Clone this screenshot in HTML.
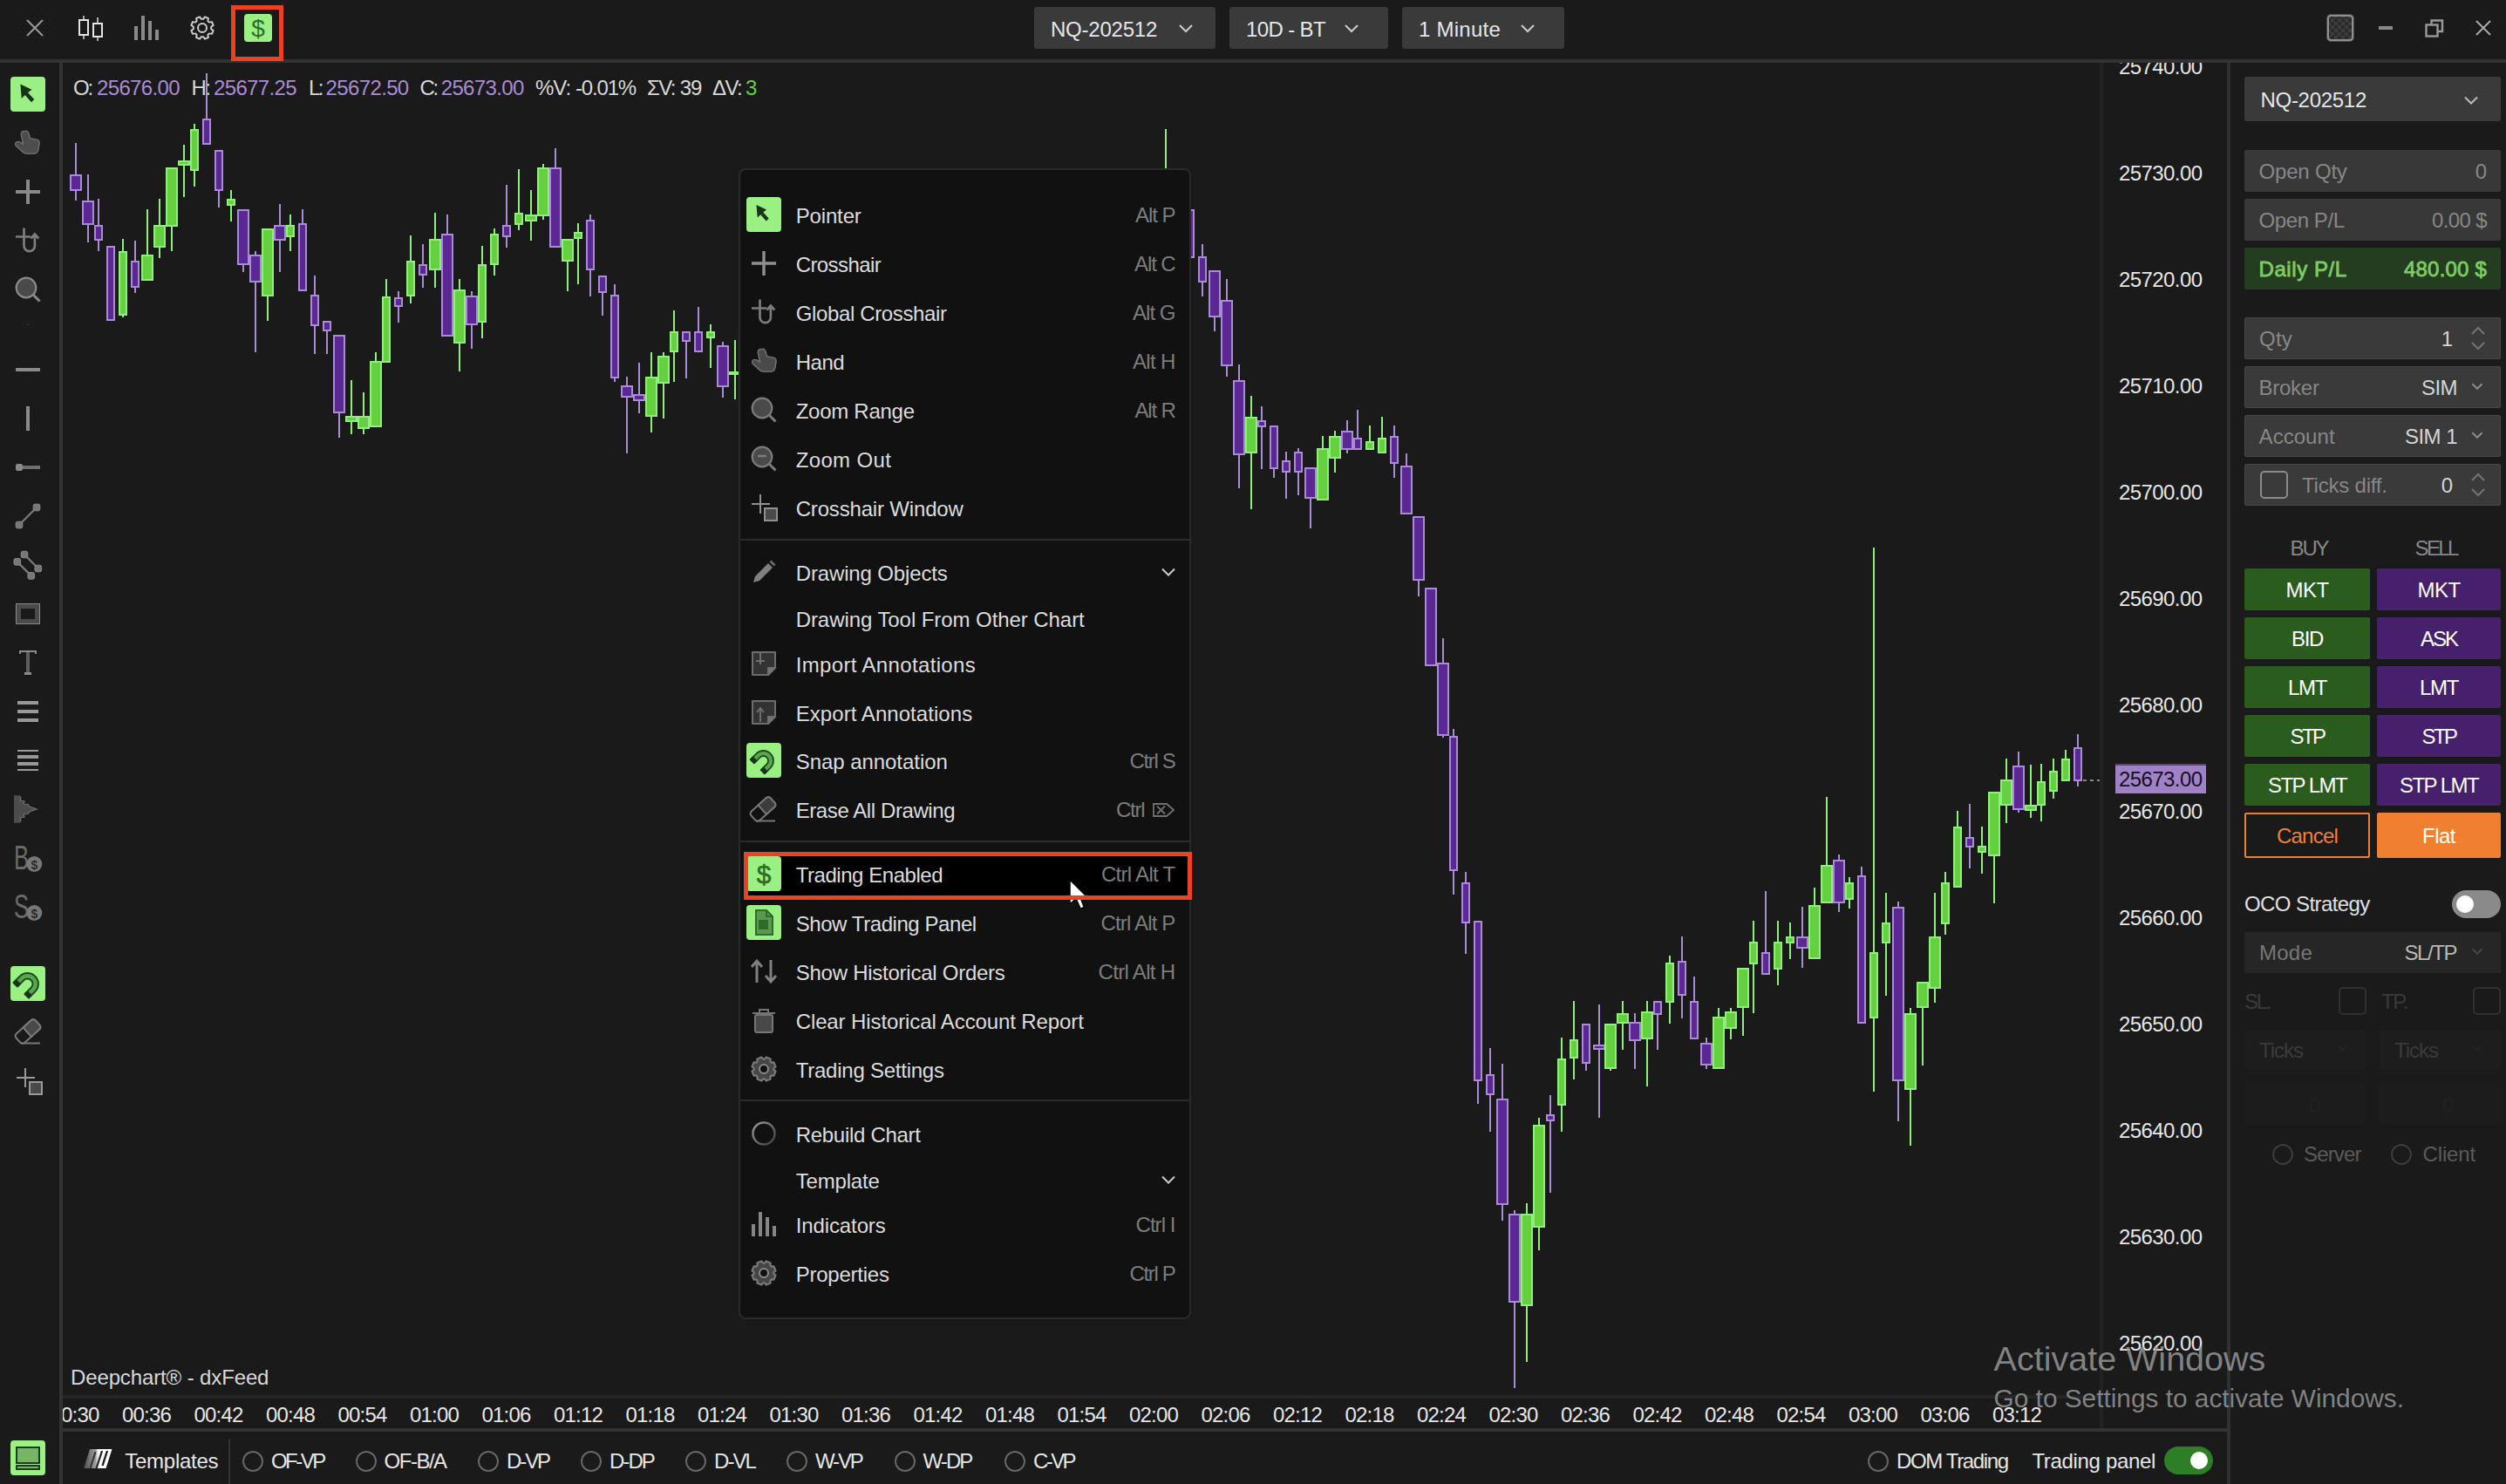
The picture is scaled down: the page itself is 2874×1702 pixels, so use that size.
<!DOCTYPE html>
<html><head><meta charset="utf-8"><title>Deepchart</title><style>html,body{margin:0;padding:0;background:#1a1a1a;}
body{width:2874px;height:1702px;position:relative;overflow:hidden;font-family:"Liberation Sans",sans-serif;}
.b{position:absolute;display:block;}
.t{position:absolute;white-space:nowrap;}
</style></head><body>
<div class="t" style="left:84.0px;top:85.0px;font-size:24px;line-height:32px;color:#d8d8d8;letter-spacing:-2.17px;">O:</div>
<div class="t" style="left:111.0px;top:85.0px;font-size:24px;line-height:32px;color:#a98bd6;letter-spacing:-0.64px;">25676.00</div>
<div class="t" style="left:219.5px;top:85.0px;font-size:24px;line-height:32px;color:#d8d8d8;letter-spacing:-1.50px;">H:</div>
<div class="t" style="left:245.0px;top:85.0px;font-size:24px;line-height:32px;color:#a98bd6;letter-spacing:-0.64px;">25677.25</div>
<div class="t" style="left:354.0px;top:85.0px;font-size:24px;line-height:32px;color:#d8d8d8;letter-spacing:-2.51px;">L:</div>
<div class="t" style="left:373.6px;top:85.0px;font-size:24px;line-height:32px;color:#a98bd6;letter-spacing:-0.64px;">25672.50</div>
<div class="t" style="left:481.6px;top:85.0px;font-size:24px;line-height:32px;color:#d8d8d8;letter-spacing:-2.50px;">C:</div>
<div class="t" style="left:505.7px;top:85.0px;font-size:24px;line-height:32px;color:#a98bd6;letter-spacing:-0.64px;">25673.00</div>
<div class="t" style="left:614.0px;top:85.0px;font-size:24px;line-height:32px;color:#d8d8d8;letter-spacing:-1.04px;">%V:</div>
<div class="t" style="left:660.0px;top:85.0px;font-size:24px;line-height:32px;color:#d8d8d8;letter-spacing:-1.17px;">-0.01%</div>
<div class="t" style="left:742.0px;top:85.0px;font-size:24px;line-height:32px;color:#d8d8d8;letter-spacing:-1.54px;">ΣV:</div>
<div class="t" style="left:779.7px;top:85.0px;font-size:24px;line-height:32px;color:#d8d8d8;letter-spacing:-1.10px;">39</div>
<div class="t" style="left:817.0px;top:85.0px;font-size:24px;line-height:32px;color:#d8d8d8;letter-spacing:-1.61px;">ΔV:</div>
<div class="t" style="left:855.0px;top:85.0px;font-size:24px;line-height:32px;color:#64d040;">3</div>
<svg class="b" style="left:0;top:0" width="2410" height="1600" shape-rendering="crispEdges"><rect x="86" y="164" width="2" height="66" fill="#a98bd6"/><rect x="80" y="200" width="14" height="19" fill="#a98bd6"/><rect x="82" y="202" width="10" height="15" fill="#5b2893"/><rect x="100" y="200" width="2" height="78" fill="#a98bd6"/><rect x="94" y="230" width="14" height="28" fill="#a98bd6"/><rect x="96" y="232" width="10" height="24" fill="#5b2893"/><rect x="112" y="228" width="2" height="60" fill="#a98bd6"/><rect x="108" y="258" width="10" height="18" fill="#a98bd6"/><rect x="110" y="260" width="6" height="14" fill="#5b2893"/><rect x="126" y="282" width="2" height="86" fill="#a98bd6"/><rect x="122" y="282" width="10" height="86" fill="#a98bd6"/><rect x="124" y="284" width="6" height="82" fill="#5b2893"/><rect x="140" y="274" width="2" height="90" fill="#90ee7c"/><rect x="136" y="288" width="10" height="74" fill="#90ee7c"/><rect x="138" y="290" width="6" height="70" fill="#64d040"/><rect x="154" y="276" width="2" height="60" fill="#a98bd6"/><rect x="150" y="299" width="10" height="31" fill="#a98bd6"/><rect x="152" y="301" width="6" height="27" fill="#5b2893"/><rect x="168" y="240" width="2" height="82" fill="#90ee7c"/><rect x="162" y="292" width="14" height="30" fill="#90ee7c"/><rect x="164" y="294" width="10" height="26" fill="#64d040"/><rect x="182" y="228" width="2" height="68" fill="#90ee7c"/><rect x="176" y="258" width="14" height="26" fill="#90ee7c"/><rect x="178" y="260" width="10" height="22" fill="#64d040"/><rect x="196" y="192" width="2" height="96" fill="#90ee7c"/><rect x="190" y="192" width="14" height="68" fill="#90ee7c"/><rect x="192" y="194" width="10" height="64" fill="#64d040"/><rect x="210" y="166" width="2" height="60" fill="#90ee7c"/><rect x="204" y="184" width="14" height="6" fill="#90ee7c"/><rect x="206" y="186" width="10" height="2" fill="#64d040"/><rect x="222" y="142" width="2" height="72" fill="#90ee7c"/><rect x="218" y="148" width="10" height="48" fill="#90ee7c"/><rect x="220" y="150" width="6" height="44" fill="#64d040"/><rect x="236" y="84" width="2" height="82" fill="#a98bd6"/><rect x="232" y="136" width="10" height="30" fill="#a98bd6"/><rect x="234" y="138" width="6" height="26" fill="#5b2893"/><rect x="250" y="172" width="2" height="66" fill="#a98bd6"/><rect x="246" y="172" width="10" height="47" fill="#a98bd6"/><rect x="248" y="174" width="6" height="43" fill="#5b2893"/><rect x="264" y="218" width="2" height="36" fill="#90ee7c"/><rect x="260" y="228" width="10" height="8" fill="#90ee7c"/><rect x="262" y="230" width="6" height="4" fill="#64d040"/><rect x="278" y="240" width="2" height="72" fill="#a98bd6"/><rect x="272" y="240" width="14" height="64" fill="#a98bd6"/><rect x="274" y="242" width="10" height="60" fill="#5b2893"/><rect x="292" y="288" width="2" height="116" fill="#a98bd6"/><rect x="286" y="292" width="14" height="32" fill="#a98bd6"/><rect x="288" y="294" width="10" height="28" fill="#5b2893"/><rect x="306" y="262" width="2" height="106" fill="#90ee7c"/><rect x="300" y="262" width="14" height="78" fill="#90ee7c"/><rect x="302" y="264" width="10" height="74" fill="#64d040"/><rect x="320" y="234" width="2" height="78" fill="#a98bd6"/><rect x="314" y="258" width="14" height="18" fill="#a98bd6"/><rect x="316" y="260" width="10" height="14" fill="#5b2893"/><rect x="332" y="246" width="2" height="42" fill="#90ee7c"/><rect x="328" y="258" width="10" height="14" fill="#90ee7c"/><rect x="330" y="260" width="6" height="10" fill="#64d040"/><rect x="346" y="240" width="2" height="94" fill="#a98bd6"/><rect x="342" y="256" width="10" height="78" fill="#a98bd6"/><rect x="344" y="258" width="6" height="74" fill="#5b2893"/><rect x="360" y="316" width="2" height="90" fill="#a98bd6"/><rect x="356" y="338" width="10" height="36" fill="#a98bd6"/><rect x="358" y="340" width="6" height="32" fill="#5b2893"/><rect x="374" y="368" width="2" height="38" fill="#a98bd6"/><rect x="370" y="368" width="10" height="12" fill="#a98bd6"/><rect x="372" y="370" width="6" height="8" fill="#5b2893"/><rect x="388" y="384" width="2" height="118" fill="#a98bd6"/><rect x="382" y="384" width="14" height="90" fill="#a98bd6"/><rect x="384" y="386" width="10" height="86" fill="#5b2893"/><rect x="402" y="436" width="2" height="62" fill="#90ee7c"/><rect x="396" y="477" width="14" height="7" fill="#90ee7c"/><rect x="398" y="479" width="10" height="3" fill="#64d040"/><rect x="416" y="450" width="2" height="48" fill="#90ee7c"/><rect x="410" y="477" width="14" height="15" fill="#90ee7c"/><rect x="412" y="479" width="10" height="11" fill="#64d040"/><rect x="430" y="404" width="2" height="86" fill="#90ee7c"/><rect x="424" y="414" width="14" height="76" fill="#90ee7c"/><rect x="426" y="416" width="10" height="72" fill="#64d040"/><rect x="442" y="320" width="2" height="96" fill="#90ee7c"/><rect x="438" y="340" width="10" height="76" fill="#90ee7c"/><rect x="440" y="342" width="6" height="72" fill="#64d040"/><rect x="456" y="334" width="2" height="36" fill="#a98bd6"/><rect x="452" y="341" width="10" height="11" fill="#a98bd6"/><rect x="454" y="343" width="6" height="7" fill="#5b2893"/><rect x="470" y="270" width="2" height="78" fill="#90ee7c"/><rect x="466" y="299" width="10" height="41" fill="#90ee7c"/><rect x="468" y="301" width="6" height="37" fill="#64d040"/><rect x="484" y="280" width="2" height="50" fill="#a98bd6"/><rect x="480" y="303" width="10" height="13" fill="#a98bd6"/><rect x="482" y="305" width="6" height="9" fill="#5b2893"/><rect x="498" y="244" width="2" height="86" fill="#90ee7c"/><rect x="492" y="274" width="14" height="36" fill="#90ee7c"/><rect x="494" y="276" width="10" height="32" fill="#64d040"/><rect x="512" y="246" width="2" height="140" fill="#a98bd6"/><rect x="506" y="268" width="14" height="118" fill="#a98bd6"/><rect x="508" y="270" width="10" height="114" fill="#5b2893"/><rect x="526" y="320" width="2" height="106" fill="#90ee7c"/><rect x="520" y="332" width="14" height="62" fill="#90ee7c"/><rect x="522" y="334" width="10" height="58" fill="#64d040"/><rect x="540" y="334" width="2" height="66" fill="#a98bd6"/><rect x="534" y="339" width="14" height="34" fill="#a98bd6"/><rect x="536" y="341" width="10" height="30" fill="#5b2893"/><rect x="552" y="282" width="2" height="106" fill="#90ee7c"/><rect x="548" y="303" width="10" height="67" fill="#90ee7c"/><rect x="550" y="305" width="6" height="63" fill="#64d040"/><rect x="566" y="262" width="2" height="54" fill="#90ee7c"/><rect x="562" y="268" width="10" height="36" fill="#90ee7c"/><rect x="564" y="270" width="6" height="32" fill="#64d040"/><rect x="580" y="212" width="2" height="72" fill="#a98bd6"/><rect x="576" y="258" width="10" height="14" fill="#a98bd6"/><rect x="578" y="260" width="6" height="10" fill="#5b2893"/><rect x="594" y="194" width="2" height="70" fill="#90ee7c"/><rect x="590" y="244" width="10" height="14" fill="#90ee7c"/><rect x="592" y="246" width="6" height="10" fill="#64d040"/><rect x="608" y="218" width="2" height="58" fill="#90ee7c"/><rect x="602" y="246" width="14" height="8" fill="#90ee7c"/><rect x="604" y="248" width="10" height="4" fill="#64d040"/><rect x="622" y="188" width="2" height="64" fill="#90ee7c"/><rect x="616" y="192" width="14" height="56" fill="#90ee7c"/><rect x="618" y="194" width="10" height="52" fill="#64d040"/><rect x="636" y="170" width="2" height="114" fill="#a98bd6"/><rect x="630" y="192" width="14" height="92" fill="#a98bd6"/><rect x="632" y="194" width="10" height="88" fill="#5b2893"/><rect x="650" y="274" width="2" height="60" fill="#90ee7c"/><rect x="644" y="274" width="14" height="26" fill="#90ee7c"/><rect x="646" y="276" width="10" height="22" fill="#64d040"/><rect x="662" y="256" width="2" height="70" fill="#90ee7c"/><rect x="658" y="266" width="10" height="8" fill="#90ee7c"/><rect x="660" y="268" width="6" height="4" fill="#64d040"/><rect x="676" y="246" width="2" height="94" fill="#a98bd6"/><rect x="672" y="252" width="10" height="58" fill="#a98bd6"/><rect x="674" y="254" width="6" height="54" fill="#5b2893"/><rect x="690" y="316" width="2" height="46" fill="#a98bd6"/><rect x="686" y="316" width="10" height="20" fill="#a98bd6"/><rect x="688" y="318" width="6" height="16" fill="#5b2893"/><rect x="704" y="326" width="2" height="112" fill="#a98bd6"/><rect x="700" y="338" width="10" height="96" fill="#a98bd6"/><rect x="702" y="340" width="6" height="92" fill="#5b2893"/><rect x="718" y="432" width="2" height="88" fill="#a98bd6"/><rect x="712" y="442" width="14" height="14" fill="#a98bd6"/><rect x="714" y="444" width="10" height="10" fill="#5b2893"/><rect x="732" y="416" width="2" height="58" fill="#a98bd6"/><rect x="726" y="452" width="14" height="8" fill="#a98bd6"/><rect x="728" y="454" width="10" height="4" fill="#5b2893"/><rect x="746" y="404" width="2" height="92" fill="#90ee7c"/><rect x="740" y="432" width="14" height="46" fill="#90ee7c"/><rect x="742" y="434" width="10" height="42" fill="#64d040"/><rect x="760" y="404" width="2" height="76" fill="#90ee7c"/><rect x="754" y="408" width="14" height="32" fill="#90ee7c"/><rect x="756" y="410" width="10" height="28" fill="#64d040"/><rect x="772" y="356" width="2" height="82" fill="#90ee7c"/><rect x="768" y="380" width="10" height="24" fill="#90ee7c"/><rect x="770" y="382" width="6" height="20" fill="#64d040"/><rect x="786" y="380" width="2" height="54" fill="#a98bd6"/><rect x="782" y="380" width="10" height="12" fill="#a98bd6"/><rect x="784" y="382" width="6" height="8" fill="#5b2893"/><rect x="800" y="352" width="2" height="52" fill="#a98bd6"/><rect x="796" y="380" width="10" height="24" fill="#a98bd6"/><rect x="798" y="382" width="6" height="20" fill="#5b2893"/><rect x="814" y="372" width="2" height="50" fill="#90ee7c"/><rect x="810" y="380" width="10" height="8" fill="#90ee7c"/><rect x="812" y="382" width="6" height="4" fill="#64d040"/><rect x="828" y="392" width="2" height="64" fill="#a98bd6"/><rect x="822" y="396" width="14" height="48" fill="#a98bd6"/><rect x="824" y="398" width="10" height="44" fill="#5b2893"/><rect x="842" y="390" width="2" height="68" fill="#90ee7c"/><rect x="836" y="426" width="14" height="4" fill="#90ee7c"/><rect x="1336" y="148" width="2" height="182" fill="#90ee7c"/><rect x="1332" y="300" width="10" height="20" fill="#90ee7c"/><rect x="1334" y="302" width="6" height="16" fill="#64d040"/><rect x="1364" y="240" width="2" height="56" fill="#a98bd6"/><rect x="1360" y="240" width="10" height="56" fill="#a98bd6"/><rect x="1362" y="242" width="6" height="52" fill="#5b2893"/><rect x="1378" y="280" width="2" height="60" fill="#a98bd6"/><rect x="1374" y="294" width="10" height="30" fill="#a98bd6"/><rect x="1376" y="296" width="6" height="26" fill="#5b2893"/><rect x="1392" y="310" width="2" height="70" fill="#a98bd6"/><rect x="1386" y="310" width="14" height="54" fill="#a98bd6"/><rect x="1388" y="312" width="10" height="50" fill="#5b2893"/><rect x="1406" y="320" width="2" height="112" fill="#a98bd6"/><rect x="1400" y="344" width="14" height="76" fill="#a98bd6"/><rect x="1402" y="346" width="10" height="72" fill="#5b2893"/><rect x="1420" y="418" width="2" height="142" fill="#a98bd6"/><rect x="1414" y="436" width="14" height="86" fill="#a98bd6"/><rect x="1416" y="438" width="10" height="82" fill="#5b2893"/><rect x="1434" y="454" width="2" height="130" fill="#90ee7c"/><rect x="1428" y="478" width="14" height="42" fill="#90ee7c"/><rect x="1430" y="480" width="10" height="38" fill="#64d040"/><rect x="1446" y="466" width="2" height="72" fill="#a98bd6"/><rect x="1442" y="482" width="10" height="8" fill="#a98bd6"/><rect x="1444" y="484" width="6" height="4" fill="#5b2893"/><rect x="1460" y="488" width="2" height="60" fill="#a98bd6"/><rect x="1456" y="488" width="10" height="50" fill="#a98bd6"/><rect x="1458" y="490" width="6" height="46" fill="#5b2893"/><rect x="1474" y="518" width="2" height="54" fill="#a98bd6"/><rect x="1470" y="528" width="10" height="14" fill="#a98bd6"/><rect x="1472" y="530" width="6" height="10" fill="#5b2893"/><rect x="1488" y="514" width="2" height="54" fill="#a98bd6"/><rect x="1484" y="518" width="10" height="24" fill="#a98bd6"/><rect x="1486" y="520" width="6" height="20" fill="#5b2893"/><rect x="1502" y="536" width="2" height="70" fill="#a98bd6"/><rect x="1496" y="536" width="14" height="36" fill="#a98bd6"/><rect x="1498" y="538" width="10" height="32" fill="#5b2893"/><rect x="1516" y="500" width="2" height="74" fill="#90ee7c"/><rect x="1510" y="514" width="14" height="60" fill="#90ee7c"/><rect x="1512" y="516" width="10" height="56" fill="#64d040"/><rect x="1530" y="494" width="2" height="48" fill="#90ee7c"/><rect x="1524" y="500" width="14" height="26" fill="#90ee7c"/><rect x="1526" y="502" width="10" height="22" fill="#64d040"/><rect x="1544" y="482" width="2" height="38" fill="#a98bd6"/><rect x="1538" y="494" width="14" height="22" fill="#a98bd6"/><rect x="1540" y="496" width="10" height="18" fill="#5b2893"/><rect x="1556" y="470" width="2" height="46" fill="#a98bd6"/><rect x="1552" y="502" width="10" height="14" fill="#a98bd6"/><rect x="1554" y="504" width="6" height="10" fill="#5b2893"/><rect x="1570" y="488" width="2" height="28" fill="#90ee7c"/><rect x="1566" y="506" width="10" height="10" fill="#90ee7c"/><rect x="1568" y="508" width="6" height="6" fill="#64d040"/><rect x="1584" y="478" width="2" height="42" fill="#90ee7c"/><rect x="1580" y="502" width="10" height="18" fill="#90ee7c"/><rect x="1582" y="504" width="6" height="14" fill="#64d040"/><rect x="1598" y="488" width="2" height="60" fill="#a98bd6"/><rect x="1594" y="500" width="10" height="32" fill="#a98bd6"/><rect x="1596" y="502" width="6" height="28" fill="#5b2893"/><rect x="1612" y="520" width="2" height="70" fill="#a98bd6"/><rect x="1606" y="534" width="14" height="56" fill="#a98bd6"/><rect x="1608" y="536" width="10" height="52" fill="#5b2893"/><rect x="1626" y="592" width="2" height="92" fill="#a98bd6"/><rect x="1620" y="592" width="14" height="74" fill="#a98bd6"/><rect x="1622" y="594" width="10" height="70" fill="#5b2893"/><rect x="1640" y="674" width="2" height="90" fill="#a98bd6"/><rect x="1634" y="674" width="14" height="90" fill="#a98bd6"/><rect x="1636" y="676" width="10" height="86" fill="#5b2893"/><rect x="1654" y="732" width="2" height="114" fill="#a98bd6"/><rect x="1648" y="760" width="14" height="84" fill="#a98bd6"/><rect x="1650" y="762" width="10" height="80" fill="#5b2893"/><rect x="1666" y="836" width="2" height="190" fill="#a98bd6"/><rect x="1662" y="844" width="10" height="155" fill="#a98bd6"/><rect x="1664" y="846" width="6" height="151" fill="#5b2893"/><rect x="1680" y="1000" width="2" height="94" fill="#a98bd6"/><rect x="1676" y="1012" width="10" height="47" fill="#a98bd6"/><rect x="1678" y="1014" width="6" height="43" fill="#5b2893"/><rect x="1694" y="1056" width="2" height="210" fill="#a98bd6"/><rect x="1690" y="1056" width="10" height="184" fill="#a98bd6"/><rect x="1692" y="1058" width="6" height="180" fill="#5b2893"/><rect x="1708" y="1202" width="2" height="96" fill="#a98bd6"/><rect x="1704" y="1232" width="10" height="24" fill="#a98bd6"/><rect x="1706" y="1234" width="6" height="20" fill="#5b2893"/><rect x="1722" y="1220" width="2" height="180" fill="#a98bd6"/><rect x="1716" y="1260" width="14" height="122" fill="#a98bd6"/><rect x="1718" y="1262" width="10" height="118" fill="#5b2893"/><rect x="1736" y="1388" width="2" height="204" fill="#a98bd6"/><rect x="1730" y="1392" width="14" height="102" fill="#a98bd6"/><rect x="1732" y="1394" width="10" height="98" fill="#5b2893"/><rect x="1750" y="1380" width="2" height="182" fill="#90ee7c"/><rect x="1744" y="1392" width="14" height="106" fill="#90ee7c"/><rect x="1746" y="1394" width="10" height="102" fill="#64d040"/><rect x="1764" y="1282" width="2" height="152" fill="#90ee7c"/><rect x="1758" y="1290" width="14" height="118" fill="#90ee7c"/><rect x="1760" y="1292" width="10" height="114" fill="#64d040"/><rect x="1777" y="1256" width="2" height="112" fill="#a98bd6"/><rect x="1773" y="1278" width="10" height="8" fill="#a98bd6"/><rect x="1775" y="1280" width="6" height="4" fill="#5b2893"/><rect x="1790" y="1190" width="2" height="108" fill="#90ee7c"/><rect x="1786" y="1214" width="10" height="54" fill="#90ee7c"/><rect x="1788" y="1216" width="6" height="50" fill="#64d040"/><rect x="1804" y="1148" width="2" height="90" fill="#90ee7c"/><rect x="1800" y="1192" width="10" height="22" fill="#90ee7c"/><rect x="1802" y="1194" width="6" height="18" fill="#64d040"/><rect x="1818" y="1174" width="2" height="54" fill="#a98bd6"/><rect x="1814" y="1174" width="10" height="46" fill="#a98bd6"/><rect x="1816" y="1176" width="6" height="42" fill="#5b2893"/><rect x="1833" y="1152" width="2" height="130" fill="#a98bd6"/><rect x="1827" y="1198" width="14" height="6" fill="#a98bd6"/><rect x="1829" y="1200" width="10" height="2" fill="#5b2893"/><rect x="1846" y="1174" width="2" height="54" fill="#90ee7c"/><rect x="1840" y="1174" width="14" height="52" fill="#90ee7c"/><rect x="1842" y="1176" width="10" height="48" fill="#64d040"/><rect x="1860" y="1148" width="2" height="56" fill="#90ee7c"/><rect x="1854" y="1162" width="14" height="12" fill="#90ee7c"/><rect x="1856" y="1164" width="10" height="8" fill="#64d040"/><rect x="1874" y="1162" width="2" height="64" fill="#a98bd6"/><rect x="1868" y="1172" width="14" height="22" fill="#a98bd6"/><rect x="1870" y="1174" width="10" height="18" fill="#5b2893"/><rect x="1888" y="1148" width="2" height="98" fill="#90ee7c"/><rect x="1882" y="1160" width="14" height="32" fill="#90ee7c"/><rect x="1884" y="1162" width="10" height="28" fill="#64d040"/><rect x="1900" y="1148" width="2" height="56" fill="#a98bd6"/><rect x="1896" y="1148" width="10" height="16" fill="#a98bd6"/><rect x="1898" y="1150" width="6" height="12" fill="#5b2893"/><rect x="1914" y="1096" width="2" height="78" fill="#90ee7c"/><rect x="1910" y="1104" width="10" height="46" fill="#90ee7c"/><rect x="1912" y="1106" width="6" height="42" fill="#64d040"/><rect x="1928" y="1074" width="2" height="94" fill="#a98bd6"/><rect x="1924" y="1102" width="10" height="40" fill="#a98bd6"/><rect x="1926" y="1104" width="6" height="36" fill="#5b2893"/><rect x="1942" y="1120" width="2" height="72" fill="#a98bd6"/><rect x="1938" y="1148" width="10" height="44" fill="#a98bd6"/><rect x="1940" y="1150" width="6" height="40" fill="#5b2893"/><rect x="1956" y="1190" width="2" height="36" fill="#a98bd6"/><rect x="1950" y="1196" width="14" height="26" fill="#a98bd6"/><rect x="1952" y="1198" width="10" height="22" fill="#5b2893"/><rect x="1970" y="1156" width="2" height="70" fill="#90ee7c"/><rect x="1964" y="1166" width="14" height="60" fill="#90ee7c"/><rect x="1966" y="1168" width="10" height="56" fill="#64d040"/><rect x="1984" y="1156" width="2" height="36" fill="#90ee7c"/><rect x="1978" y="1160" width="14" height="20" fill="#90ee7c"/><rect x="1980" y="1162" width="10" height="16" fill="#64d040"/><rect x="1998" y="1110" width="2" height="78" fill="#90ee7c"/><rect x="1992" y="1110" width="14" height="46" fill="#90ee7c"/><rect x="1994" y="1112" width="10" height="42" fill="#64d040"/><rect x="2010" y="1056" width="2" height="106" fill="#90ee7c"/><rect x="2006" y="1080" width="10" height="26" fill="#90ee7c"/><rect x="2008" y="1082" width="6" height="22" fill="#64d040"/><rect x="2024" y="1022" width="2" height="96" fill="#a98bd6"/><rect x="2020" y="1092" width="10" height="26" fill="#a98bd6"/><rect x="2022" y="1094" width="6" height="22" fill="#5b2893"/><rect x="2038" y="1056" width="2" height="74" fill="#90ee7c"/><rect x="2034" y="1080" width="10" height="32" fill="#90ee7c"/><rect x="2036" y="1082" width="6" height="28" fill="#64d040"/><rect x="2052" y="1058" width="2" height="42" fill="#90ee7c"/><rect x="2048" y="1074" width="10" height="8" fill="#90ee7c"/><rect x="2050" y="1076" width="6" height="4" fill="#64d040"/><rect x="2066" y="1040" width="2" height="70" fill="#a98bd6"/><rect x="2060" y="1074" width="14" height="14" fill="#a98bd6"/><rect x="2062" y="1076" width="10" height="10" fill="#5b2893"/><rect x="2080" y="1018" width="2" height="82" fill="#90ee7c"/><rect x="2074" y="1038" width="14" height="62" fill="#90ee7c"/><rect x="2076" y="1040" width="10" height="58" fill="#64d040"/><rect x="2094" y="914" width="2" height="122" fill="#90ee7c"/><rect x="2088" y="992" width="14" height="44" fill="#90ee7c"/><rect x="2090" y="994" width="10" height="40" fill="#64d040"/><rect x="2108" y="980" width="2" height="66" fill="#a98bd6"/><rect x="2102" y="986" width="14" height="50" fill="#a98bd6"/><rect x="2104" y="988" width="10" height="46" fill="#5b2893"/><rect x="2120" y="1006" width="2" height="36" fill="#90ee7c"/><rect x="2116" y="1012" width="10" height="20" fill="#90ee7c"/><rect x="2118" y="1014" width="6" height="16" fill="#64d040"/><rect x="2134" y="994" width="2" height="180" fill="#a98bd6"/><rect x="2130" y="1004" width="10" height="170" fill="#a98bd6"/><rect x="2132" y="1006" width="6" height="166" fill="#5b2893"/><rect x="2148" y="628" width="2" height="624" fill="#90ee7c"/><rect x="2144" y="1092" width="10" height="76" fill="#90ee7c"/><rect x="2146" y="1094" width="6" height="72" fill="#64d040"/><rect x="2162" y="1024" width="2" height="118" fill="#90ee7c"/><rect x="2158" y="1058" width="10" height="24" fill="#90ee7c"/><rect x="2160" y="1060" width="6" height="20" fill="#64d040"/><rect x="2176" y="1034" width="2" height="252" fill="#a98bd6"/><rect x="2170" y="1040" width="14" height="200" fill="#a98bd6"/><rect x="2172" y="1042" width="10" height="196" fill="#5b2893"/><rect x="2190" y="1156" width="2" height="158" fill="#90ee7c"/><rect x="2184" y="1162" width="14" height="88" fill="#90ee7c"/><rect x="2186" y="1164" width="10" height="84" fill="#64d040"/><rect x="2204" y="1126" width="2" height="96" fill="#90ee7c"/><rect x="2198" y="1126" width="14" height="30" fill="#90ee7c"/><rect x="2200" y="1128" width="10" height="26" fill="#64d040"/><rect x="2218" y="1024" width="2" height="126" fill="#90ee7c"/><rect x="2212" y="1074" width="14" height="60" fill="#90ee7c"/><rect x="2214" y="1076" width="10" height="56" fill="#64d040"/><rect x="2230" y="1000" width="2" height="72" fill="#90ee7c"/><rect x="2226" y="1012" width="10" height="48" fill="#90ee7c"/><rect x="2228" y="1014" width="6" height="44" fill="#64d040"/><rect x="2244" y="930" width="2" height="88" fill="#90ee7c"/><rect x="2240" y="948" width="10" height="70" fill="#90ee7c"/><rect x="2242" y="950" width="6" height="66" fill="#64d040"/><rect x="2258" y="922" width="2" height="74" fill="#a98bd6"/><rect x="2254" y="960" width="10" height="12" fill="#a98bd6"/><rect x="2256" y="962" width="6" height="8" fill="#5b2893"/><rect x="2272" y="948" width="2" height="54" fill="#90ee7c"/><rect x="2268" y="970" width="10" height="8" fill="#90ee7c"/><rect x="2270" y="972" width="6" height="4" fill="#64d040"/><rect x="2286" y="908" width="2" height="128" fill="#90ee7c"/><rect x="2280" y="908" width="14" height="74" fill="#90ee7c"/><rect x="2282" y="910" width="10" height="70" fill="#64d040"/><rect x="2300" y="870" width="2" height="74" fill="#90ee7c"/><rect x="2294" y="894" width="14" height="30" fill="#90ee7c"/><rect x="2296" y="896" width="10" height="26" fill="#64d040"/><rect x="2314" y="862" width="2" height="70" fill="#a98bd6"/><rect x="2308" y="878" width="14" height="51" fill="#a98bd6"/><rect x="2310" y="880" width="10" height="47" fill="#5b2893"/><rect x="2328" y="877" width="2" height="61" fill="#90ee7c"/><rect x="2322" y="923" width="14" height="7" fill="#90ee7c"/><rect x="2324" y="925" width="10" height="3" fill="#64d040"/><rect x="2340" y="876" width="2" height="66" fill="#90ee7c"/><rect x="2336" y="896" width="10" height="28" fill="#90ee7c"/><rect x="2338" y="898" width="6" height="24" fill="#64d040"/><rect x="2354" y="870" width="2" height="46" fill="#90ee7c"/><rect x="2350" y="884" width="10" height="24" fill="#90ee7c"/><rect x="2352" y="886" width="6" height="20" fill="#64d040"/><rect x="2368" y="860" width="2" height="36" fill="#90ee7c"/><rect x="2364" y="870" width="10" height="26" fill="#90ee7c"/><rect x="2366" y="872" width="6" height="22" fill="#64d040"/><rect x="2382" y="842" width="2" height="60" fill="#a98bd6"/><rect x="2378" y="857" width="10" height="39" fill="#a98bd6"/><rect x="2380" y="859" width="6" height="35" fill="#5b2893"/><rect x="2389" y="894" width="4" height="2" fill="#888"/><rect x="2397" y="894" width="4" height="2" fill="#888"/><rect x="2405" y="894" width="4" height="2" fill="#888"/></svg>
<div class="b" style="left:0px;top:68px;width:2874px;height:4px;background:#333333;"></div>
<div class="b" style="left:68px;top:72px;width:4px;height:1630px;background:#333333;"></div>
<div class="b" style="left:2554px;top:72px;width:4px;height:1630px;background:#313131;"></div>
<div class="b" style="left:68px;top:1638px;width:2488px;height:4px;background:#333333;"></div>
<div class="b" style="left:72px;top:1600px;width:2338px;height:4px;background:#252525;"></div>
<div class="b" style="left:2408px;top:72px;width:4px;height:1566px;background:#222222;"></div>
<svg class="b" style="left:28px;top:20px;" width="24" height="24" viewBox="0 0 24 24"><path d="M3 3 L21 21 M21 3 L3 21" stroke="#999" stroke-width="2" fill="none"/></svg>
<svg class="b" style="left:86px;top:16px;" width="36" height="32" viewBox="0 0 36 32"><g fill="none" stroke="#e4e4e4" stroke-width="2"><rect x="5" y="7" width="10" height="17"/><rect x="21" y="11" width="10" height="15"/></g><g fill="#aaa"><rect x="9" y="2" width="2" height="4"/><rect x="9" y="25" width="2" height="4"/><rect x="25" y="4" width="2" height="6"/><rect x="25" y="27" width="2" height="4"/></g></svg>
<svg class="b" style="left:150px;top:16px;" width="36" height="32" viewBox="0 0 36 32"><g fill="#8a8a8a"><rect x="4" y="14" width="4" height="16"/><rect x="12" y="2" width="4" height="28"/><rect x="20" y="8" width="4" height="22"/><rect x="28" y="18" width="4" height="12"/></g></svg>
<svg class="b" style="left:216px;top:16px;" width="32" height="32" viewBox="0 0 32 32"><g fill="none" stroke="#ccc" stroke-width="2" stroke-linejoin="round"><path d="M17.12 5.86 L18.94 3.34 L22.88 4.97 L22.38 8.04 L23.96 9.62 L27.03 9.12 L28.66 13.06 L26.14 14.88 L26.14 17.12 L28.66 18.94 L27.03 22.88 L23.96 22.38 L22.38 23.96 L22.88 27.03 L18.94 28.66 L17.12 26.14 L14.88 26.14 L13.06 28.66 L9.12 27.03 L9.62 23.96 L8.04 22.38 L4.97 22.88 L3.34 18.94 L5.86 17.12 L5.86 14.88 L3.34 13.06 L4.97 9.12 L8.04 9.62 L9.62 8.04 L9.12 4.97 L13.06 3.34 L14.88 5.86 Z"/><circle cx="16" cy="16" r="5"/></g></svg>
<div class="b" style="left:280px;top:16px;width:32px;height:32px;background:#9bf083;border-radius:4px;"></div>
<div class="t" style="left:288.2px;top:16.5px;font-size:28px;line-height:32px;color:#2f6b2a;">$</div>
<div class="b" style="left:265px;top:6px;width:60px;height:64px;border:5px solid #ee4023;box-sizing:border-box;"></div>
<div class="b" style="left:1186px;top:8px;width:208px;height:48px;background:#3a3a3a;border-radius:3px;"></div>
<div class="t" style="left:1205.0px;top:17.5px;font-size:24px;line-height:32px;color:#e6e6e6;letter-spacing:-0.23px;">NQ-202512</div>
<svg class="b" style="left:1350px;top:25px;" width="20" height="16" viewBox="0 0 20 16"><path d="M3 4 L10 11 L17 4" stroke="#ccc" stroke-width="2" fill="none"/></svg>
<div class="b" style="left:1410px;top:8px;width:182px;height:48px;background:#3a3a3a;border-radius:3px;"></div>
<div class="t" style="left:1429.0px;top:17.5px;font-size:24px;line-height:32px;color:#e6e6e6;letter-spacing:-0.63px;">10D - BT</div>
<svg class="b" style="left:1540px;top:25px;" width="20" height="16" viewBox="0 0 20 16"><path d="M3 4 L10 11 L17 4" stroke="#ccc" stroke-width="2" fill="none"/></svg>
<div class="b" style="left:1608px;top:8px;width:186px;height:48px;background:#3a3a3a;border-radius:3px;"></div>
<div class="t" style="left:1627.0px;top:17.5px;font-size:24px;line-height:32px;color:#e6e6e6;letter-spacing:0.24px;">1 Minute</div>
<svg class="b" style="left:1742px;top:25px;" width="20" height="16" viewBox="0 0 20 16"><path d="M3 4 L10 11 L17 4" stroke="#ccc" stroke-width="2" fill="none"/></svg>
<div class="b" style="left:2668px;top:16px;width:32px;height:32px;border-radius:5px;border:1px solid #484848;box-sizing:border-box;"></div>
<div class="b" style="left:2669px;top:17px;width:30px;height:30px;border-radius:4px;border:2px solid #8f8f8f;box-sizing:border-box;background:repeating-conic-gradient(#2a2a2a 0% 25%, #3c3c3c 0% 50%) 2px 2px/8px 8px;"></div>
<div class="b" style="left:2728px;top:30px;width:16px;height:4px;background:#8a8a8a;"></div>
<svg class="b" style="left:2780px;top:20px;" width="24" height="24" viewBox="0 0 24 24"><g fill="none" stroke="#999" stroke-width="2.4"><rect x="2.5" y="8.5" width="13" height="13"/><path d="M8.5 8 V3.5 H21 V16 H16"/></g></svg>
<svg class="b" style="left:2838px;top:22px;" width="20" height="20" viewBox="0 0 20 20"><path d="M2 2 L18 18 M18 2 L2 18" stroke="#aaa" stroke-width="2" fill="none"/></svg>
<div class="t" style="left:2430.0px;top:1524.5px;font-size:24px;line-height:32px;color:#e6e6e6;letter-spacing:-0.58px;">25620.00</div>
<div class="t" style="left:2430.0px;top:1402.5px;font-size:24px;line-height:32px;color:#e6e6e6;letter-spacing:-0.58px;">25630.00</div>
<div class="t" style="left:2430.0px;top:1280.5px;font-size:24px;line-height:32px;color:#e6e6e6;letter-spacing:-0.58px;">25640.00</div>
<div class="t" style="left:2430.0px;top:1158.5px;font-size:24px;line-height:32px;color:#e6e6e6;letter-spacing:-0.58px;">25650.00</div>
<div class="t" style="left:2430.0px;top:1036.5px;font-size:24px;line-height:32px;color:#e6e6e6;letter-spacing:-0.58px;">25660.00</div>
<div class="t" style="left:2430.0px;top:914.5px;font-size:24px;line-height:32px;color:#e6e6e6;letter-spacing:-0.58px;">25670.00</div>
<div class="t" style="left:2430.0px;top:792.5px;font-size:24px;line-height:32px;color:#e6e6e6;letter-spacing:-0.58px;">25680.00</div>
<div class="t" style="left:2430.0px;top:670.5px;font-size:24px;line-height:32px;color:#e6e6e6;letter-spacing:-0.58px;">25690.00</div>
<div class="t" style="left:2430.0px;top:548.5px;font-size:24px;line-height:32px;color:#e6e6e6;letter-spacing:-0.58px;">25700.00</div>
<div class="t" style="left:2430.0px;top:426.5px;font-size:24px;line-height:32px;color:#e6e6e6;letter-spacing:-0.58px;">25710.00</div>
<div class="t" style="left:2430.0px;top:304.5px;font-size:24px;line-height:32px;color:#e6e6e6;letter-spacing:-0.58px;">25720.00</div>
<div class="t" style="left:2430.0px;top:182.5px;font-size:24px;line-height:32px;color:#e6e6e6;letter-spacing:-0.58px;">25730.00</div>
<div class="b" style="left:2420px;top:72px;width:120px;height:30px;overflow:hidden">
<div class="t" style="left:10.0px;top:-11.5px;font-size:24px;line-height:32px;color:#e6e6e6;letter-spacing:-0.58px;">25740.00</div>
</div>
<div class="b" style="left:2426px;top:876px;width:104px;height:34px;background:#a081c5;border-top:2px solid #574769;box-sizing:border-box;"></div>
<div class="t" style="left:2430.0px;top:878.0px;font-size:24px;line-height:32px;color:#15101f;letter-spacing:-0.58px;">25673.00</div>
<div class="b" style="left:72px;top:1604px;width:2338px;height:34px;overflow:hidden">
<div class="t" style="left:-14.5px;top:3.0px;font-size:24px;line-height:32px;color:#e6e6e6;letter-spacing:-0.81px;">00:30</div>
<div class="t" style="left:68.0px;top:3.0px;font-size:24px;line-height:32px;color:#e6e6e6;letter-spacing:-0.81px;">00:36</div>
<div class="t" style="left:150.5px;top:3.0px;font-size:24px;line-height:32px;color:#e6e6e6;letter-spacing:-0.81px;">00:42</div>
<div class="t" style="left:233.0px;top:3.0px;font-size:24px;line-height:32px;color:#e6e6e6;letter-spacing:-0.81px;">00:48</div>
<div class="t" style="left:315.5px;top:3.0px;font-size:24px;line-height:32px;color:#e6e6e6;letter-spacing:-0.81px;">00:54</div>
<div class="t" style="left:398.0px;top:3.0px;font-size:24px;line-height:32px;color:#e6e6e6;letter-spacing:-0.81px;">01:00</div>
<div class="t" style="left:480.5px;top:3.0px;font-size:24px;line-height:32px;color:#e6e6e6;letter-spacing:-0.81px;">01:06</div>
<div class="t" style="left:563.0px;top:3.0px;font-size:24px;line-height:32px;color:#e6e6e6;letter-spacing:-0.81px;">01:12</div>
<div class="t" style="left:645.5px;top:3.0px;font-size:24px;line-height:32px;color:#e6e6e6;letter-spacing:-0.81px;">01:18</div>
<div class="t" style="left:728.0px;top:3.0px;font-size:24px;line-height:32px;color:#e6e6e6;letter-spacing:-0.81px;">01:24</div>
<div class="t" style="left:810.5px;top:3.0px;font-size:24px;line-height:32px;color:#e6e6e6;letter-spacing:-0.81px;">01:30</div>
<div class="t" style="left:893.0px;top:3.0px;font-size:24px;line-height:32px;color:#e6e6e6;letter-spacing:-0.81px;">01:36</div>
<div class="t" style="left:975.5px;top:3.0px;font-size:24px;line-height:32px;color:#e6e6e6;letter-spacing:-0.81px;">01:42</div>
<div class="t" style="left:1058.0px;top:3.0px;font-size:24px;line-height:32px;color:#e6e6e6;letter-spacing:-0.81px;">01:48</div>
<div class="t" style="left:1140.5px;top:3.0px;font-size:24px;line-height:32px;color:#e6e6e6;letter-spacing:-0.81px;">01:54</div>
<div class="t" style="left:1223.0px;top:3.0px;font-size:24px;line-height:32px;color:#e6e6e6;letter-spacing:-0.81px;">02:00</div>
<div class="t" style="left:1305.5px;top:3.0px;font-size:24px;line-height:32px;color:#e6e6e6;letter-spacing:-0.81px;">02:06</div>
<div class="t" style="left:1388.0px;top:3.0px;font-size:24px;line-height:32px;color:#e6e6e6;letter-spacing:-0.81px;">02:12</div>
<div class="t" style="left:1470.5px;top:3.0px;font-size:24px;line-height:32px;color:#e6e6e6;letter-spacing:-0.81px;">02:18</div>
<div class="t" style="left:1553.0px;top:3.0px;font-size:24px;line-height:32px;color:#e6e6e6;letter-spacing:-0.81px;">02:24</div>
<div class="t" style="left:1635.5px;top:3.0px;font-size:24px;line-height:32px;color:#e6e6e6;letter-spacing:-0.81px;">02:30</div>
<div class="t" style="left:1718.0px;top:3.0px;font-size:24px;line-height:32px;color:#e6e6e6;letter-spacing:-0.81px;">02:36</div>
<div class="t" style="left:1800.5px;top:3.0px;font-size:24px;line-height:32px;color:#e6e6e6;letter-spacing:-0.81px;">02:42</div>
<div class="t" style="left:1883.0px;top:3.0px;font-size:24px;line-height:32px;color:#e6e6e6;letter-spacing:-0.81px;">02:48</div>
<div class="t" style="left:1965.5px;top:3.0px;font-size:24px;line-height:32px;color:#e6e6e6;letter-spacing:-0.81px;">02:54</div>
<div class="t" style="left:2048.0px;top:3.0px;font-size:24px;line-height:32px;color:#e6e6e6;letter-spacing:-0.81px;">03:00</div>
<div class="t" style="left:2130.5px;top:3.0px;font-size:24px;line-height:32px;color:#e6e6e6;letter-spacing:-0.81px;">03:06</div>
<div class="t" style="left:2213.0px;top:3.0px;font-size:24px;line-height:32px;color:#e6e6e6;letter-spacing:-0.81px;">03:12</div>
</div>
<div class="t" style="left:81.0px;top:1563.5px;font-size:24px;line-height:32px;color:#d8d8d8;letter-spacing:-0.13px;">Deepchart® - dxFeed</div>
<div class="b" style="left:12px;top:1652px;width:40px;height:40px;background:#9bf083;border-radius:4px;"></div>
<svg class="b" style="left:12px;top:1652px;" width="40" height="40" viewBox="0 0 40 40"><g fill="#78b466" stroke="#1c3d1b" stroke-width="2"><rect x="7" y="8" width="26" height="18"/><rect x="7" y="29" width="26" height="4"/></g></svg>
<svg class="b" style="left:96px;top:1661px;" width="34" height="24" viewBox="0 0 34 24"><defs><linearGradient id="tg" x1="0" y1="0" x2="1" y2="0"><stop offset="0" stop-color="#4a4a4a"/><stop offset="0.42" stop-color="#a0a0a0"/><stop offset="0.52" stop-color="#ffffff"/><stop offset="1" stop-color="#ffffff"/></linearGradient></defs><path d="M0 23 L7 1 L32.5 1 L25.5 23 Z" fill="url(#tg)"/><g stroke-width="2.4" fill="none"><path d="M7.5 23 L13.5 4" stroke="#3a3a3a"/><path d="M14.5 23 L21 3" stroke="#2a2a2a"/><path d="M21.5 20 L27 3" stroke="#1e1e1e"/></g></svg>
<div class="t" style="left:143.3px;top:1660.0px;font-size:24px;line-height:32px;color:#e6e6e6;letter-spacing:-0.26px;">Templates</div>
<div class="b" style="left:262px;top:1651px;width:2px;height:51px;background:#333333;"></div>
<div class="b" style="left:278px;top:1664px;width:24px;height:24px;border-radius:12px;border:2px solid #666;box-sizing:border-box;"></div>
<div class="t" style="left:311.0px;top:1660.0px;font-size:24px;line-height:32px;color:#e6e6e6;letter-spacing:-2.55px;">OF-VP</div>
<div class="b" style="left:408px;top:1664px;width:24px;height:24px;border-radius:12px;border:2px solid #666;box-sizing:border-box;"></div>
<div class="t" style="left:440.6px;top:1660.0px;font-size:24px;line-height:32px;color:#e6e6e6;letter-spacing:-1.50px;">OF-B/A</div>
<div class="b" style="left:547.8px;top:1664px;width:24px;height:24px;border-radius:12px;border:2px solid #666;box-sizing:border-box;"></div>
<div class="t" style="left:581.0px;top:1660.0px;font-size:24px;line-height:32px;color:#e6e6e6;letter-spacing:-2.08px;">D-VP</div>
<div class="b" style="left:665.8px;top:1664px;width:24px;height:24px;border-radius:12px;border:2px solid #666;box-sizing:border-box;"></div>
<div class="t" style="left:699.0px;top:1660.0px;font-size:24px;line-height:32px;color:#e6e6e6;letter-spacing:-1.97px;">D-DP</div>
<div class="b" style="left:785.7px;top:1664px;width:24px;height:24px;border-radius:12px;border:2px solid #666;box-sizing:border-box;"></div>
<div class="t" style="left:819.0px;top:1660.0px;font-size:24px;line-height:32px;color:#e6e6e6;letter-spacing:-1.92px;">D-VL</div>
<div class="b" style="left:901.8px;top:1664px;width:24px;height:24px;border-radius:12px;border:2px solid #666;box-sizing:border-box;"></div>
<div class="t" style="left:935.0px;top:1660.0px;font-size:24px;line-height:32px;color:#e6e6e6;letter-spacing:-2.13px;">W-VP</div>
<div class="b" style="left:1026px;top:1664px;width:24px;height:24px;border-radius:12px;border:2px solid #666;box-sizing:border-box;"></div>
<div class="t" style="left:1058.5px;top:1660.0px;font-size:24px;line-height:32px;color:#e6e6e6;letter-spacing:-1.89px;">W-DP</div>
<div class="b" style="left:1151.8px;top:1664px;width:24px;height:24px;border-radius:12px;border:2px solid #666;box-sizing:border-box;"></div>
<div class="t" style="left:1185.0px;top:1660.0px;font-size:24px;line-height:32px;color:#e6e6e6;letter-spacing:-2.58px;">C-VP</div>
<div class="b" style="left:2141.7px;top:1664px;width:24px;height:24px;border-radius:12px;border:2px solid #666;box-sizing:border-box;"></div>
<div class="t" style="left:2175.0px;top:1660.0px;font-size:24px;line-height:32px;color:#e6e6e6;letter-spacing:-1.37px;">DOM Trading</div>
<div class="t" style="left:2330.4px;top:1660.0px;font-size:24px;line-height:32px;color:#e6e6e6;letter-spacing:-0.33px;">Trading panel</div>
<div class="b" style="left:2482px;top:1659px;width:56px;height:32px;background:#2e7d27;border-radius:16px;"></div>
<div class="b" style="left:2512px;top:1665px;width:20px;height:20px;background:#fff;border-radius:10px;"></div>
<div class="b" style="left:12px;top:88px;width:40px;height:40px;background:#9bf083;border-radius:4px;"></div>
<svg class="b" style="left:12px;top:88px;" width="40" height="40" viewBox="0 0 40 40"><g transform="translate(-1.5,-1.5) scale(1.12)"><path d="M11.5 9 l1.2 14.6 l3.6 -3.4 l6.4 7.2 l3 -2.8 l-6.4 -7 l3.8 -3.2 z" fill="#16351a"/></g></svg>
<svg class="b" style="left:16px;top:148px;" width="34" height="34" viewBox="0 0 34 34"><g transform="translate(1,1)"><path d="M11.5 1.5 c1.8 -.8 3.6 .2 4.2 2 l1.8 6.3 l7 1.2 c2.6 .5 3.9 2.5 3.5 5 l-1.2 7.2 c-.5 2.6 -2.2 4 -4.8 4 l-8 0 c-2 0 -3.6 -.7 -5 -2 l-7.4 -6.8 c-1.6 -1.5 -1.2 -3.8 .8 -4.6 c1.6 -.6 3.2 -.2 4.6 .8 l2.6 1.8 l-2.2 -10.6 c-.4 -2 .6 -3.6 2.4 -4.3 z" fill="#4d4d4d" stroke="#6a6a6a" stroke-width="1.6" stroke-linejoin="round"/></g></svg>
<svg class="b" style="left:16px;top:204px;" width="32" height="32" viewBox="0 0 32 32"><path d="M16 2 V30 M2 16 H30" stroke="#8a8a8a" stroke-width="4" fill="none"/></svg>
<svg class="b" style="left:16px;top:260px;" width="32" height="32" viewBox="0 0 32 32"><g fill="none" stroke="#7e7e7e" stroke-width="2.7"><path d="M11.5 1.5 V14 M2 11.5 H19"/><path d="M11.5 14 v8 a6.2 6.2 0 0 0 12.4 0 V9.5 M19.5 13.5 l4.4 -5 l4.4 5"/></g></svg>
<svg class="b" style="left:16px;top:316px;" width="32" height="32" viewBox="0 0 32 32"><circle cx="14" cy="14" r="11.3" fill="#4a4a4a" stroke="#8a8a8a" stroke-width="2.2"/><path d="M22 22 L29.5 29.5" stroke="#8a8a8a" stroke-width="3"/></svg>
<div class="b" style="left:31px;top:371px;width:2px;height:2px;background:#2c2c2c;"></div>
<div class="b" style="left:18px;top:422px;width:28px;height:4px;background:#8a8a8a;"></div>
<div class="b" style="left:30px;top:466px;width:4px;height:28px;background:#8a8a8a;"></div>
<div class="b" style="left:18px;top:534px;width:28px;height:4px;background:#6e6e6e;"></div>
<div class="b" style="left:18px;top:532px;width:8px;height:8px;background:#8a8a8a;border-radius:2px;"></div>
<svg class="b" style="left:0px;top:560px;" width="64" height="120" viewBox="0 0 64 120"><path d="M22 42 L42 22" stroke="#777" stroke-width="2.4"/><rect x="18.2" y="38.2" width="7.6" height="7.6" rx="2" fill="#777" stroke="#8a8a8a" stroke-width="1"/><rect x="38.2" y="18.2" width="7.6" height="7.6" rx="2" fill="#777" stroke="#8a8a8a" stroke-width="1"/><path d="M28 76 L43.8 92 M19.8 84.3 L35.8 100.4" stroke="#777" stroke-width="2.4"/><rect x="24.2" y="72.2" width="7.6" height="7.6" rx="2" fill="#777" stroke="#8a8a8a" stroke-width="1"/><rect x="40.0" y="88.2" width="7.6" height="7.6" rx="2" fill="#777" stroke="#8a8a8a" stroke-width="1"/><rect x="16.0" y="80.5" width="7.6" height="7.6" rx="2" fill="#777" stroke="#8a8a8a" stroke-width="1"/><rect x="31.999999999999996" y="96.60000000000001" width="7.6" height="7.6" rx="2" fill="#777" stroke="#8a8a8a" stroke-width="1"/></svg>
<div class="b" style="left:18px;top:692px;width:28px;height:24px;background:#4a4a4a;border:1.5px solid #8a8a8a;box-sizing:border-box;"></div>
<div class="b" style="left:24px;top:698px;width:16px;height:12px;background:#1a1a1a;"></div>
<div class="b" style="left:22px;top:746px;width:20px;height:2px;background:#8a8a8a;"></div>
<div class="b" style="left:22px;top:746px;width:2px;height:4px;background:#8a8a8a;"></div>
<div class="b" style="left:40px;top:746px;width:2px;height:4px;background:#8a8a8a;"></div>
<div class="b" style="left:30px;top:748px;width:4px;height:24px;background:#5e5e5e;"></div>
<div class="b" style="left:28px;top:771px;width:8px;height:2.5px;background:#8a8a8a;"></div>
<div class="b" style="left:20px;top:804px;width:24px;height:4px;background:#999;"></div>
<div class="b" style="left:20px;top:814px;width:24px;height:4px;background:#999;"></div>
<div class="b" style="left:20px;top:824px;width:24px;height:4px;background:#999;"></div>
<div class="b" style="left:20px;top:860px;width:24px;height:2px;background:#999;"></div>
<div class="b" style="left:20px;top:866px;width:24px;height:4px;background:#999;"></div>
<div class="b" style="left:20px;top:874px;width:24px;height:4px;background:#999;"></div>
<div class="b" style="left:20px;top:882px;width:24px;height:2px;background:#999;"></div>
<svg class="b" style="left:14px;top:910px;" width="36" height="36" viewBox="0 0 36 36"><path d="M2 2 L8 2.5 L10 5 L9 8 L14 9 L13 12 L18 12.5 L20 15 L28 18 L20 21 L18 23.5 L13 24 L14 27 L9 28 L10 31 L8 33.5 L2 34 Z" fill="#4c4c4c"/><path d="M8 2.5 L10 5 L9 8 L14 9 L13 12 L18 12.5 L20 15 L28 18 L20 21 L18 23.5 L13 24 L14 27 L9 28 L10 31 L8 33.5" fill="none" stroke="#707070" stroke-width="1.2"/></svg>
<div class="t" style="left:16.0px;top:962.0px;font-size:39px;line-height:44px;color:#6a6a6a;transform:scaleX(0.66);transform-origin:0 50%;">B</div>
<svg class="b" style="left:30px;top:981px;" width="20" height="20" viewBox="0 0 20 20"><circle cx="9.3" cy="10" r="9" fill="#777"/></svg>
<div class="t" style="left:35.4px;top:982.5px;font-size:14px;line-height:18px;color:#2a2a2a;font-weight:bold;">$</div>
<div class="t" style="left:16.0px;top:1018.0px;font-size:39px;line-height:44px;color:#6a6a6a;transform:scaleX(0.66);transform-origin:0 50%;">S</div>
<svg class="b" style="left:30px;top:1037px;" width="20" height="20" viewBox="0 0 20 20"><circle cx="9.3" cy="10" r="9" fill="#777"/></svg>
<div class="t" style="left:35.4px;top:1038.5px;font-size:14px;line-height:18px;color:#2a2a2a;font-weight:bold;">$</div>
<div class="b" style="left:12px;top:1108px;width:40px;height:40px;background:#9bf083;border-radius:4px;"></div>
<svg class="b" style="left:12px;top:1108px;" width="40" height="40" viewBox="0 0 40 40"><g transform="translate(19.5,20.5) rotate(45) scale(1.08)"><path d="M-11.5 9.5 L-11.5 0 A11.5 11.5 0 0 1 11.5 0 L11.5 9.5 L5.5 9.5 L5.5 0 A5.5 5.5 0 0 0 -5.5 0 L-5.5 9.5 Z" fill="#5aa64e" stroke="#1d4a1c" stroke-width="1.8" stroke-linejoin="round"/><path d="M-11.5 5.5 H-5.5 V9.5 H-11.5 Z M5.5 5.5 H11.5 V9.5 H5.5 Z" fill="#16351a" stroke="#16351a" stroke-width="1.2" stroke-linejoin="round"/></g></svg>
<svg class="b" style="left:16px;top:1168px;" width="34" height="32" viewBox="0 0 34 32"><g transform="rotate(-42 16 15)"><rect x="1" y="8" width="30" height="14" rx="3.5" fill="none" stroke="#7a7a7a" stroke-width="2"/><path d="M15 8 H27.5 a3.5 3.5 0 0 1 3.5 3.5 V18.5 a3.5 3.5 0 0 1 -3.5 3.5 H15 Z" fill="#4a4a4a" stroke="#7a7a7a" stroke-width="2"/></g><path d="M8 28.5 H30" stroke="#7a7a7a" stroke-width="2"/></svg>
<svg class="b" style="left:18.5px;top:1224px;" width="32" height="34" viewBox="0 0 32 34"><path d="M10 1 V23 M0 12 H21" stroke="#999" stroke-width="2" fill="none"/><rect x="15" y="17" width="14" height="14" fill="#4a4a4a" stroke="#999" stroke-width="2"/></svg>
<div class="b" style="left:2574px;top:88px;width:294px;height:51px;background:#3a3a3a;border-radius:2px;"></div>
<div class="t" style="left:2592.5px;top:98.5px;font-size:24px;line-height:32px;color:#e6e6e6;letter-spacing:-0.29px;">NQ-202512</div>
<svg class="b" style="left:2824px;top:106.5px;" width="20" height="16" viewBox="0 0 20 16"><path d="M3.0 4.5 L10 11.5 L17.0 4.5" stroke="#bbb" stroke-width="2" fill="none"/></svg>
<div class="b" style="left:2574px;top:172px;width:294px;height:48px;background:#383838;border-radius:2px;"></div>
<div class="t" style="left:2590.6px;top:180.5px;font-size:24px;line-height:32px;color:#878787;letter-spacing:-0.21px;">Open Qty</div>
<div class="t" style="left:2838.7px;top:180.5px;font-size:24px;line-height:32px;color:#878787;">0</div>
<div class="b" style="left:2574px;top:228px;width:294px;height:48px;background:#383838;border-radius:2px;"></div>
<div class="t" style="left:2590.6px;top:236.5px;font-size:24px;line-height:32px;color:#878787;letter-spacing:-0.43px;">Open P/L</div>
<div class="t" style="left:2789.0px;top:236.5px;font-size:24px;line-height:32px;color:#878787;letter-spacing:-0.62px;">0.00 $</div>
<div class="b" style="left:2574px;top:284px;width:294px;height:48px;background:#243d20;border-radius:2px;"></div>
<div class="t" style="left:2590.6px;top:293.0px;font-size:24px;line-height:32px;color:#7ccc64;letter-spacing:0.55px;-webkit-text-stroke:0.8px #7ccc64;">Daily P/L</div>
<div class="t" style="left:2757.0px;top:293.0px;font-size:24px;line-height:32px;color:#7ccc64;letter-spacing:0.20px;-webkit-text-stroke:0.8px #7ccc64;">480.00 $</div>
<div class="b" style="left:2574px;top:364px;width:294px;height:48px;background:#3a3a3a;border-radius:2px;border:1px solid #484848;box-sizing:border-box;"></div>
<div class="t" style="left:2591.0px;top:372.5px;font-size:24px;line-height:32px;color:#878787;letter-spacing:0.22px;">Qty</div>
<div class="t" style="left:2799.7px;top:372.5px;font-size:24px;line-height:32px;color:#d4d4d4;">1</div>
<svg class="b" style="left:2831.5px;top:370px;" width="20" height="36" viewBox="0 0 20 36"><path d="M3 13 L10 6 L17 13 M3 23 L10 30 L17 23" stroke="#747474" stroke-width="2" fill="none"/></svg>
<div class="b" style="left:2574px;top:420px;width:294px;height:48px;background:#3a3a3a;border-radius:2px;border:1px solid #484848;box-sizing:border-box;"></div>
<div class="t" style="left:2590.6px;top:428.5px;font-size:24px;line-height:32px;color:#878787;letter-spacing:-0.28px;">Broker</div>
<div class="t" style="left:2777.0px;top:428.5px;font-size:24px;line-height:32px;color:#d4d4d4;letter-spacing:-0.56px;">SIM</div>
<svg class="b" style="left:2831px;top:435px;" width="20" height="16" viewBox="0 0 20 16"><path d="M4.3999999999999995 5.199999999999999 L10 10.8 L15.600000000000001 5.199999999999999" stroke="#8c8c8c" stroke-width="2" fill="none"/></svg>
<div class="b" style="left:2574px;top:476px;width:294px;height:48px;background:#3a3a3a;border-radius:2px;border:1px solid #484848;box-sizing:border-box;"></div>
<div class="t" style="left:2590.6px;top:484.5px;font-size:24px;line-height:32px;color:#878787;letter-spacing:0.04px;">Account</div>
<div class="t" style="left:2758.0px;top:484.5px;font-size:24px;line-height:32px;color:#d4d4d4;letter-spacing:-0.54px;">SIM 1</div>
<svg class="b" style="left:2831px;top:491px;" width="20" height="16" viewBox="0 0 20 16"><path d="M4.3999999999999995 5.199999999999999 L10 10.8 L15.600000000000001 5.199999999999999" stroke="#8c8c8c" stroke-width="2" fill="none"/></svg>
<div class="b" style="left:2574px;top:532px;width:294px;height:48px;background:#3a3a3a;border-radius:2px;border:1px solid #484848;box-sizing:border-box;"></div>
<div class="b" style="left:2592px;top:540px;width:32px;height:32px;border-radius:5px;border:2px solid #8a8a8a;box-sizing:border-box;"></div>
<div class="t" style="left:2640.0px;top:540.5px;font-size:24px;line-height:32px;color:#878787;letter-spacing:-0.21px;">Ticks diff.</div>
<div class="t" style="left:2799.7px;top:540.5px;font-size:24px;line-height:32px;color:#d4d4d4;">0</div>
<svg class="b" style="left:2831.5px;top:538px;" width="20" height="36" viewBox="0 0 20 36"><path d="M3 13 L10 6 L17 13 M3 23 L10 30 L17 23" stroke="#747474" stroke-width="2" fill="none"/></svg>
<div class="t" style="left:2626.5px;top:613.0px;font-size:24px;line-height:32px;color:#878787;letter-spacing:-2.12px;">BUY</div>
<div class="t" style="left:2769.6px;top:613.0px;font-size:24px;line-height:32px;color:#878787;letter-spacing:-2.68px;">SELL</div>
<div class="b" style="left:2574px;top:652px;width:144px;height:48px;background:#2a5c1e;border-radius:2px;"></div>
<div class="b" style="left:2726px;top:652px;width:142px;height:48px;background:#46206c;border-radius:2px;"></div>
<div class="t" style="left:2621.5px;top:660.5px;font-size:24px;line-height:32px;color:#fff;letter-spacing:-0.55px;">MKT</div>
<div class="t" style="left:2772.5px;top:660.5px;font-size:24px;line-height:32px;color:#fff;letter-spacing:-0.55px;">MKT</div>
<div class="b" style="left:2574px;top:708px;width:144px;height:48px;background:#2a5c1e;border-radius:2px;"></div>
<div class="b" style="left:2726px;top:708px;width:142px;height:48px;background:#46206c;border-radius:2px;"></div>
<div class="t" style="left:2628.0px;top:716.5px;font-size:24px;line-height:32px;color:#fff;letter-spacing:-1.34px;">BID</div>
<div class="t" style="left:2776.0px;top:716.5px;font-size:24px;line-height:32px;color:#fff;letter-spacing:-2.01px;">ASK</div>
<div class="b" style="left:2574px;top:764px;width:144px;height:48px;background:#2a5c1e;border-radius:2px;"></div>
<div class="b" style="left:2726px;top:764px;width:142px;height:48px;background:#46206c;border-radius:2px;"></div>
<div class="t" style="left:2624.0px;top:772.5px;font-size:24px;line-height:32px;color:#fff;letter-spacing:-1.33px;">LMT</div>
<div class="t" style="left:2775.0px;top:772.5px;font-size:24px;line-height:32px;color:#fff;letter-spacing:-1.33px;">LMT</div>
<div class="b" style="left:2574px;top:820px;width:144px;height:48px;background:#2a5c1e;border-radius:2px;"></div>
<div class="b" style="left:2726px;top:820px;width:142px;height:48px;background:#46206c;border-radius:2px;"></div>
<div class="t" style="left:2626.5px;top:828.5px;font-size:24px;line-height:32px;color:#fff;letter-spacing:-2.56px;">STP</div>
<div class="t" style="left:2777.5px;top:828.5px;font-size:24px;line-height:32px;color:#fff;letter-spacing:-2.56px;">STP</div>
<div class="b" style="left:2574px;top:876px;width:144px;height:48px;background:#2a5c1e;border-radius:2px;"></div>
<div class="b" style="left:2726px;top:876px;width:142px;height:48px;background:#46206c;border-radius:2px;"></div>
<div class="t" style="left:2601.0px;top:884.5px;font-size:24px;line-height:32px;color:#fff;letter-spacing:-1.56px;">STP LMT</div>
<div class="t" style="left:2752.0px;top:884.5px;font-size:24px;line-height:32px;color:#fff;letter-spacing:-1.56px;">STP LMT</div>
<div class="b" style="left:2574px;top:932px;width:144px;height:52px;border-radius:2px;border:2px solid #f08030;box-sizing:border-box;"></div>
<div class="t" style="left:2611.0px;top:942.5px;font-size:24px;line-height:32px;color:#f08030;letter-spacing:-0.78px;">Cancel</div>
<div class="b" style="left:2726px;top:932px;width:142px;height:52px;background:#f08030;border-radius:2px;"></div>
<div class="t" style="left:2778.0px;top:942.5px;font-size:24px;line-height:32px;color:#fff;letter-spacing:-0.50px;">Flat</div>
<div class="t" style="left:2574.0px;top:1021.0px;font-size:24px;line-height:32px;color:#e0e0e0;letter-spacing:-0.58px;">OCO Strategy</div>
<div class="b" style="left:2812px;top:1021px;width:56px;height:32px;background:#8a8a8a;border-radius:16px;"></div>
<div class="b" style="left:2817px;top:1027px;width:20px;height:20px;background:#fff;border-radius:10px;"></div>
<div class="b" style="left:2574px;top:1069px;width:294px;height:47px;background:#262626;border-radius:2px;"></div>
<div class="t" style="left:2591.0px;top:1077.0px;font-size:24px;line-height:32px;color:#777;letter-spacing:0.24px;">Mode</div>
<div class="t" style="left:2757.5px;top:1077.0px;font-size:24px;line-height:32px;color:#b8b8b8;letter-spacing:-1.44px;">SL/TP</div>
<svg class="b" style="left:2831px;top:1083px;" width="20" height="16" viewBox="0 0 20 16"><path d="M4.3999999999999995 5.199999999999999 L10 10.8 L15.600000000000001 5.199999999999999" stroke="#444" stroke-width="2" fill="none"/></svg>
<div class="t" style="left:2574.0px;top:1133.0px;font-size:24px;line-height:32px;color:#3a3a3a;letter-spacing:-2.34px;">SL.</div>
<div class="b" style="left:2682px;top:1132px;width:32px;height:32px;border-radius:5px;border:2px solid #303030;box-sizing:border-box;"></div>
<div class="t" style="left:2731.0px;top:1133.0px;font-size:24px;line-height:32px;color:#3a3a3a;letter-spacing:-1.41px;">TP.</div>
<div class="b" style="left:2836px;top:1132px;width:32px;height:32px;border-radius:5px;border:2px solid #303030;box-sizing:border-box;"></div>
<div class="b" style="left:2574px;top:1181px;width:140px;height:45px;background:#1d1d1d;border-radius:2px;"></div>
<div class="b" style="left:2729px;top:1181px;width:139px;height:45px;background:#1d1d1d;border-radius:2px;"></div>
<div class="t" style="left:2591.0px;top:1188.5px;font-size:24px;line-height:32px;color:#3a3a3a;letter-spacing:-1.02px;">Ticks</div>
<div class="t" style="left:2746.0px;top:1188.5px;font-size:24px;line-height:32px;color:#3a3a3a;letter-spacing:-1.02px;">Ticks</div>
<svg class="b" style="left:2677px;top:1194px;" width="20" height="16" viewBox="0 0 20 16"><path d="M4.3999999999999995 5.199999999999999 L10 10.8 L15.600000000000001 5.199999999999999" stroke="#242424" stroke-width="2" fill="none"/></svg>
<svg class="b" style="left:2831px;top:1194px;" width="20" height="16" viewBox="0 0 20 16"><path d="M4.3999999999999995 5.199999999999999 L10 10.8 L15.600000000000001 5.199999999999999" stroke="#242424" stroke-width="2" fill="none"/></svg>
<div class="b" style="left:2574px;top:1245px;width:140px;height:45px;background:#1c1c1c;border-radius:2px;"></div>
<div class="b" style="left:2729px;top:1245px;width:139px;height:45px;background:#1c1c1c;border-radius:2px;"></div>
<div class="t" style="left:2648.3px;top:1252.0px;font-size:24px;line-height:32px;color:#212121;">0</div>
<div class="t" style="left:2801.3px;top:1252.0px;font-size:24px;line-height:32px;color:#212121;">0</div>
<div class="b" style="left:2606px;top:1312px;width:24px;height:24px;border-radius:12px;border:2px solid #3c3c3c;box-sizing:border-box;"></div>
<div class="t" style="left:2642.0px;top:1308.0px;font-size:24px;line-height:32px;color:#5a5a5a;letter-spacing:-0.86px;">Server</div>
<div class="b" style="left:2742px;top:1312px;width:24px;height:24px;border-radius:12px;border:2px solid #3c3c3c;box-sizing:border-box;"></div>
<div class="t" style="left:2778.5px;top:1308.0px;font-size:24px;line-height:32px;color:#5a5a5a;letter-spacing:-0.14px;">Client</div>
<div class="b" style="left:847px;top:193px;width:519px;height:1320px;background:#111111;border-radius:8px;border:2px solid #2a2a2a;box-sizing:border-box;"></div>
<div class="t" style="left:912.7px;top:232.3px;font-size:24px;line-height:32px;color:#dcdcdc;letter-spacing:-0.15px;">Pointer</div>
<div class="t" style="left:1302.0px;top:231.3px;font-size:24px;line-height:32px;color:#7c7c7c;letter-spacing:-1.04px;">Alt P</div>
<div class="t" style="left:912.7px;top:288.3px;font-size:24px;line-height:32px;color:#dcdcdc;letter-spacing:-0.58px;">Crosshair</div>
<div class="t" style="left:1301.0px;top:287.3px;font-size:24px;line-height:32px;color:#7c7c7c;letter-spacing:-1.10px;">Alt C</div>
<div class="t" style="left:912.7px;top:344.3px;font-size:24px;line-height:32px;color:#dcdcdc;letter-spacing:-0.36px;">Global Crosshair</div>
<div class="t" style="left:1299.0px;top:343.3px;font-size:24px;line-height:32px;color:#7c7c7c;letter-spacing:-0.97px;">Alt G</div>
<div class="t" style="left:912.7px;top:400.3px;font-size:24px;line-height:32px;color:#dcdcdc;letter-spacing:-0.47px;">Hand</div>
<div class="t" style="left:1299.0px;top:399.3px;font-size:24px;line-height:32px;color:#7c7c7c;letter-spacing:-0.70px;">Alt H</div>
<div class="t" style="left:912.7px;top:456.3px;font-size:24px;line-height:32px;color:#dcdcdc;letter-spacing:-0.27px;">Zoom Range</div>
<div class="t" style="left:1301.5px;top:455.3px;font-size:24px;line-height:32px;color:#7c7c7c;letter-spacing:-1.20px;">Alt R</div>
<div class="t" style="left:912.7px;top:512.3px;font-size:24px;line-height:32px;color:#dcdcdc;letter-spacing:0.35px;">Zoom Out</div>
<div class="t" style="left:912.7px;top:568.3px;font-size:24px;line-height:32px;color:#dcdcdc;letter-spacing:-0.17px;">Crosshair Window</div>
<div class="b" style="left:849px;top:618px;width:515px;height:2px;background:#2c2c2c;"></div>
<div class="t" style="left:912.7px;top:641.8px;font-size:24px;line-height:32px;color:#dcdcdc;letter-spacing:-0.14px;">Drawing Objects</div>
<div class="t" style="left:912.7px;top:694.8px;font-size:24px;line-height:32px;color:#dcdcdc;letter-spacing:-0.07px;">Drawing Tool From Other Chart</div>
<div class="t" style="left:912.7px;top:746.8px;font-size:24px;line-height:32px;color:#dcdcdc;letter-spacing:0.35px;">Import Annotations</div>
<div class="t" style="left:912.7px;top:802.8px;font-size:24px;line-height:32px;color:#dcdcdc;letter-spacing:0.06px;">Export Annotations</div>
<div class="t" style="left:912.7px;top:858.3px;font-size:24px;line-height:32px;color:#dcdcdc;letter-spacing:-0.05px;">Snap annotation</div>
<div class="t" style="left:1295.5px;top:857.3px;font-size:24px;line-height:32px;color:#7c7c7c;letter-spacing:-1.33px;">Ctrl S</div>
<div class="t" style="left:912.7px;top:914.3px;font-size:24px;line-height:32px;color:#dcdcdc;letter-spacing:-0.41px;">Erase All Drawing</div>
<div class="t" style="left:1280.0px;top:913.3px;font-size:24px;line-height:32px;color:#7c7c7c;letter-spacing:-1.21px;">Ctrl</div>
<div class="b" style="left:849px;top:964px;width:515px;height:2px;background:#2c2c2c;"></div>
<div class="b" style="left:855px;top:979px;width:510px;height:51px;background:#000;"></div>
<div class="t" style="left:912.7px;top:988.3px;font-size:24px;line-height:32px;color:#dcdcdc;letter-spacing:-0.45px;">Trading Enabled</div>
<div class="t" style="left:1263.0px;top:987.3px;font-size:24px;line-height:32px;color:#7c7c7c;letter-spacing:-0.71px;">Ctrl Alt T</div>
<div class="t" style="left:912.7px;top:1043.8px;font-size:24px;line-height:32px;color:#dcdcdc;letter-spacing:-0.43px;">Show Trading Panel</div>
<div class="t" style="left:1262.5px;top:1042.8px;font-size:24px;line-height:32px;color:#7c7c7c;letter-spacing:-0.84px;">Ctrl Alt P</div>
<div class="t" style="left:912.7px;top:1099.8px;font-size:24px;line-height:32px;color:#dcdcdc;letter-spacing:-0.25px;">Show Historical Orders</div>
<div class="t" style="left:1259.5px;top:1098.8px;font-size:24px;line-height:32px;color:#7c7c7c;letter-spacing:-0.67px;">Ctrl Alt H</div>
<div class="t" style="left:912.7px;top:1155.8px;font-size:24px;line-height:32px;color:#dcdcdc;letter-spacing:-0.11px;">Clear Historical Account Report</div>
<div class="t" style="left:912.7px;top:1211.8px;font-size:24px;line-height:32px;color:#dcdcdc;letter-spacing:-0.24px;">Trading Settings</div>
<div class="b" style="left:849px;top:1261px;width:515px;height:2px;background:#2c2c2c;"></div>
<div class="t" style="left:912.7px;top:1285.8px;font-size:24px;line-height:32px;color:#dcdcdc;letter-spacing:-0.29px;">Rebuild Chart</div>
<div class="t" style="left:912.7px;top:1338.8px;font-size:24px;line-height:32px;color:#dcdcdc;letter-spacing:-0.17px;">Template</div>
<div class="t" style="left:912.7px;top:1390.3px;font-size:24px;line-height:32px;color:#dcdcdc;letter-spacing:-0.11px;">Indicators</div>
<div class="t" style="left:1302.5px;top:1389.3px;font-size:24px;line-height:32px;color:#7c7c7c;letter-spacing:-0.94px;">Ctrl I</div>
<div class="t" style="left:912.7px;top:1446.3px;font-size:24px;line-height:32px;color:#dcdcdc;letter-spacing:-0.24px;">Properties</div>
<div class="t" style="left:1295.5px;top:1445.3px;font-size:24px;line-height:32px;color:#7c7c7c;letter-spacing:-1.33px;">Ctrl P</div>
<div class="b" style="left:856px;top:226px;width:40px;height:40px;background:#9bf083;border-radius:4px;"></div>
<svg class="b" style="left:856px;top:226px;" width="40" height="40" viewBox="0 0 40 40"><path d="M11.5 9 l1.2 14.6 l3.6 -3.4 l6.4 7.2 l3 -2.8 l-6.4 -7 l3.8 -3.2 z" fill="#16351a"/></svg>
<svg class="b" style="left:860.0px;top:286.0px;" width="32" height="32" viewBox="0 0 32 32"><path d="M16 2 V30 M2 16 H30" stroke="#909090" stroke-width="3.4" fill="none"/></svg>
<svg class="b" style="left:860.0px;top:342.0px;" width="32" height="32" viewBox="0 0 32 32"><g fill="none" stroke="#7c7c7c" stroke-width="2.7"><path d="M11.5 1.5 V14 M2 11.5 H19"/><path d="M11.5 14 v8 a6.2 6.2 0 0 0 12.4 0 V9.5 M19.5 13.5 l4.4 -5 l4.4 5"/></g></svg>
<svg class="b" style="left:860.5px;top:398.0px;" width="34" height="34" viewBox="0 0 34 34"><g transform="translate(1,1)"><path d="M11.5 1.5 c1.8 -.8 3.6 .2 4.2 2 l1.8 6.3 l7 1.2 c2.6 .5 3.9 2.5 3.5 5 l-1.2 7.2 c-.5 2.6 -2.2 4 -4.8 4 l-8 0 c-2 0 -3.6 -.7 -5 -2 l-7.4 -6.8 c-1.6 -1.5 -1.2 -3.8 .8 -4.6 c1.6 -.6 3.2 -.2 4.6 .8 l2.6 1.8 l-2.2 -10.6 c-.4 -2 .6 -3.6 2.4 -4.3 z" fill="#4a4a4a" stroke="#6e6e6e" stroke-width="1.6" stroke-linejoin="round"/></g></svg>
<svg class="b" style="left:860.0px;top:454.0px;" width="32" height="32" viewBox="0 0 32 32"><circle cx="14" cy="14" r="11.3" fill="#4a4a4a" stroke="#7c7c7c" stroke-width="2.2"/><path d="M22 22 L29.5 29.5" stroke="#7c7c7c" stroke-width="3"/></svg>
<svg class="b" style="left:860.0px;top:510.0px;" width="32" height="32" viewBox="0 0 32 32"><circle cx="14" cy="14" r="11.3" fill="#4a4a4a" stroke="#7c7c7c" stroke-width="2.2"/><path d="M22 22 L29.5 29.5" stroke="#7c7c7c" stroke-width="3"/><path d="M9 13 H19" stroke="#7c7c7c" stroke-width="2.5"/></svg>
<svg class="b" style="left:862.0px;top:565.5px;" width="32" height="34" viewBox="0 0 32 34"><path d="M10 1 V23 M0 12 H21" stroke="#909090" stroke-width="2" fill="none"/><rect x="15" y="17" width="14" height="14" fill="#4a4a4a" stroke="#909090" stroke-width="2"/></svg>
<svg class="b" style="left:860.0px;top:640.5px;" width="32" height="32" viewBox="0 0 32 32"><path d="M4 27 l2 -7 L21 5 l5 5 L11 25 z" fill="#808080"/><path d="M22.5 3.5 l2 -2 l5 5 l-2 2 z" fill="#6a6a6a"/></svg>
<svg class="b" style="left:1330px;top:648px;" width="20" height="16" viewBox="0 0 20 16"><path d="M3.0 4.5 L10 11.5 L17.0 4.5" stroke="#ccc" stroke-width="2" fill="none"/></svg>
<svg class="b" style="left:860.0px;top:744.5px;" width="32" height="32" viewBox="0 0 32 32"><g fill="none" stroke="#6e6e6e" stroke-width="2" stroke-linejoin="round"><path d="M3 3 H29 V21 L21 29 H3 Z" fill="#333"/><path d="M29 21 H21 V29 Z" fill="#777"/><path d="M12 3 V17 M7 13 H17"/></g></svg>
<svg class="b" style="left:860.0px;top:800.5px;" width="32" height="32" viewBox="0 0 32 32"><g fill="none" stroke="#6e6e6e" stroke-width="2" stroke-linejoin="round"><path d="M3 3 H29 V21 L21 29 H3 Z" fill="#333"/><path d="M29 21 H21 V29 Z" fill="#777"/><path d="M12 27 V12 M8 16 L12 11 L16 16"/></g></svg>
<div class="b" style="left:856px;top:852px;width:40px;height:40px;background:#9bf083;border-radius:4px;"></div>
<svg class="b" style="left:856px;top:852px;" width="40" height="40" viewBox="0 0 40 40"><g transform="translate(19.5,20.5) rotate(45) scale(1)"><path d="M-11.5 9.5 L-11.5 0 A11.5 11.5 0 0 1 11.5 0 L11.5 9.5 L5.5 9.5 L5.5 0 A5.5 5.5 0 0 0 -5.5 0 L-5.5 9.5 Z" fill="#5aa64e" stroke="#1d4a1c" stroke-width="1.8" stroke-linejoin="round"/><path d="M-11.5 5.5 H-5.5 V9.5 H-11.5 Z M5.5 5.5 H11.5 V9.5 H5.5 Z" fill="#16351a" stroke="#16351a" stroke-width="1.2" stroke-linejoin="round"/></g></svg>
<svg class="b" style="left:859.0px;top:913.0px;" width="34" height="32" viewBox="0 0 34 32"><g transform="rotate(-42 16 15)"><rect x="1" y="8" width="30" height="14" rx="3.5" fill="none" stroke="#777" stroke-width="2"/><path d="M15 8 H27.5 a3.5 3.5 0 0 1 3.5 3.5 V18.5 a3.5 3.5 0 0 1 -3.5 3.5 H15 Z" fill="#3c3c3c" stroke="#777" stroke-width="2"/></g><path d="M8 28.5 H30" stroke="#777" stroke-width="2"/></svg>
<svg class="b" style="left:1321px;top:920px;" width="28" height="18" viewBox="0 0 28 18"><g fill="none" stroke="#707070" stroke-width="1.8"><path d="M2 2 H17 L25 9 L17 16 H2 Z"/><path d="M6 4.5 L15 13.5 M15 4.5 L6 13.5"/></g></svg>
<div class="b" style="left:856px;top:982px;width:40px;height:40px;background:#9bf083;border-radius:4px;"></div>
<div class="t" style="left:867.7px;top:987.0px;font-size:30px;line-height:32px;color:#2f6b2a;-webkit-text-stroke:0.6px #2f6b2a;">$</div>
<div class="b" style="left:856px;top:1038px;width:40px;height:40px;background:#9bf083;border-radius:4px;"></div>
<svg class="b" style="left:856px;top:1038px;" width="40" height="40" viewBox="0 0 40 40"><g fill="#5a9a4c" stroke="#2f6b2a" stroke-width="2"><path d="M11 6 H23 L30 13 V34 H11 Z"/><path d="M23 6 V13 H30" fill="none"/><rect x="15" y="18" width="9" height="9" fill="#2f6b2a"/></g></svg>
<svg class="b" style="left:860.0px;top:1097.5px;" width="32" height="32" viewBox="0 0 32 32"><g fill="none" stroke="#808080" stroke-width="3"><path d="M8 29 V5 M2 11 L8 4 L14 11"/><path d="M24 3 V27 M18 21 L24 28 L30 21"/></g></svg>
<svg class="b" style="left:860.0px;top:1153.5px;" width="32" height="32" viewBox="0 0 32 32"><g><rect x="6" y="10" width="20" height="20" rx="2" fill="#484848" stroke="#767676" stroke-width="2"/><path d="M3 8 H29 M11 8 V4 H21 V8" stroke="#767676" stroke-width="2" fill="none"/></g></svg>
<svg class="b" style="left:860.0px;top:1209.5px;" width="32" height="32" viewBox="0 0 32 32"><g><path d="M16.89 4.64 L18.69 2.47 L23.67 4.53 L23.40 7.33 L24.67 8.60 L27.47 8.33 L29.53 13.31 L27.36 15.11 L27.36 16.89 L29.53 18.69 L27.47 23.67 L24.67 23.40 L23.40 24.67 L23.67 27.47 L18.69 29.53 L16.89 27.36 L15.11 27.36 L13.31 29.53 L8.33 27.47 L8.60 24.67 L7.33 23.40 L4.53 23.67 L2.47 18.69 L4.64 16.89 L4.64 15.11 L2.47 13.31 L4.53 8.33 L7.33 8.60 L8.60 7.33 L8.33 4.53 L13.31 2.47 L15.11 4.64 Z" fill="#464646" stroke="#787878" stroke-width="2.2" stroke-linejoin="round"/><circle cx="16" cy="16" r="5" fill="#111" stroke="#8a8a8a" stroke-width="2"/></g></svg>
<svg class="b" style="left:860.0px;top:1283.5px;" width="32" height="32" viewBox="0 0 32 32"><defs><linearGradient id="rg" x1="0" y1="0" x2="1" y2="1"><stop offset="0" stop-color="#9a9a9a"/><stop offset="1" stop-color="#3c3c3c"/></linearGradient></defs><circle cx="16" cy="16" r="12.5" fill="none" stroke="url(#rg)" stroke-width="2.5"/></svg>
<svg class="b" style="left:1330px;top:1345px;" width="20" height="16" viewBox="0 0 20 16"><path d="M3.0 4.5 L10 11.5 L17.0 4.5" stroke="#ccc" stroke-width="2" fill="none"/></svg>
<svg class="b" style="left:861.0px;top:1388.0px;" width="32" height="32" viewBox="0 0 32 32"><g fill="#868686"><rect x="1" y="16" width="4" height="14"/><rect x="9" y="2" width="4" height="28"/><rect x="17" y="8" width="4" height="22"/><rect x="25" y="18" width="4" height="12"/></g></svg>
<svg class="b" style="left:860.0px;top:1444.0px;" width="32" height="32" viewBox="0 0 32 32"><g><path d="M16.89 4.64 L18.69 2.47 L23.67 4.53 L23.40 7.33 L24.67 8.60 L27.47 8.33 L29.53 13.31 L27.36 15.11 L27.36 16.89 L29.53 18.69 L27.47 23.67 L24.67 23.40 L23.40 24.67 L23.67 27.47 L18.69 29.53 L16.89 27.36 L15.11 27.36 L13.31 29.53 L8.33 27.47 L8.60 24.67 L7.33 23.40 L4.53 23.67 L2.47 18.69 L4.64 16.89 L4.64 15.11 L2.47 13.31 L4.53 8.33 L7.33 8.60 L8.60 7.33 L8.33 4.53 L13.31 2.47 L15.11 4.64 Z" fill="#464646" stroke="#787878" stroke-width="2.2" stroke-linejoin="round"/><circle cx="16" cy="16" r="5" fill="#111" stroke="#8a8a8a" stroke-width="2"/></g></svg>
<svg class="b" style="left:1225px;top:1006.5px;" width="24" height="38" viewBox="0 0 24 38"><path d="M2 2 L2 30 L9 23.5 L14.2 35.2 L18.3 33.4 L13.6 21.25 L21.25 21.25 Z" fill="#fff" stroke="#000" stroke-width="1.5" stroke-linejoin="round"/></svg>
<div class="b" style="left:853px;top:976.5px;width:514px;height:55.5px;border:5px solid #ec4326;box-sizing:border-box;"></div>
<div class="t" style="left:2286.6px;top:1534.0px;font-size:39.5px;line-height:48px;color:rgba(160,160,160,0.78);">Activate Windows</div>
<div class="t" style="left:2286.6px;top:1579.5px;font-size:29.8px;line-height:48px;color:rgba(160,160,160,0.78);">Go to Settings to activate Windows.</div>
</body></html>
